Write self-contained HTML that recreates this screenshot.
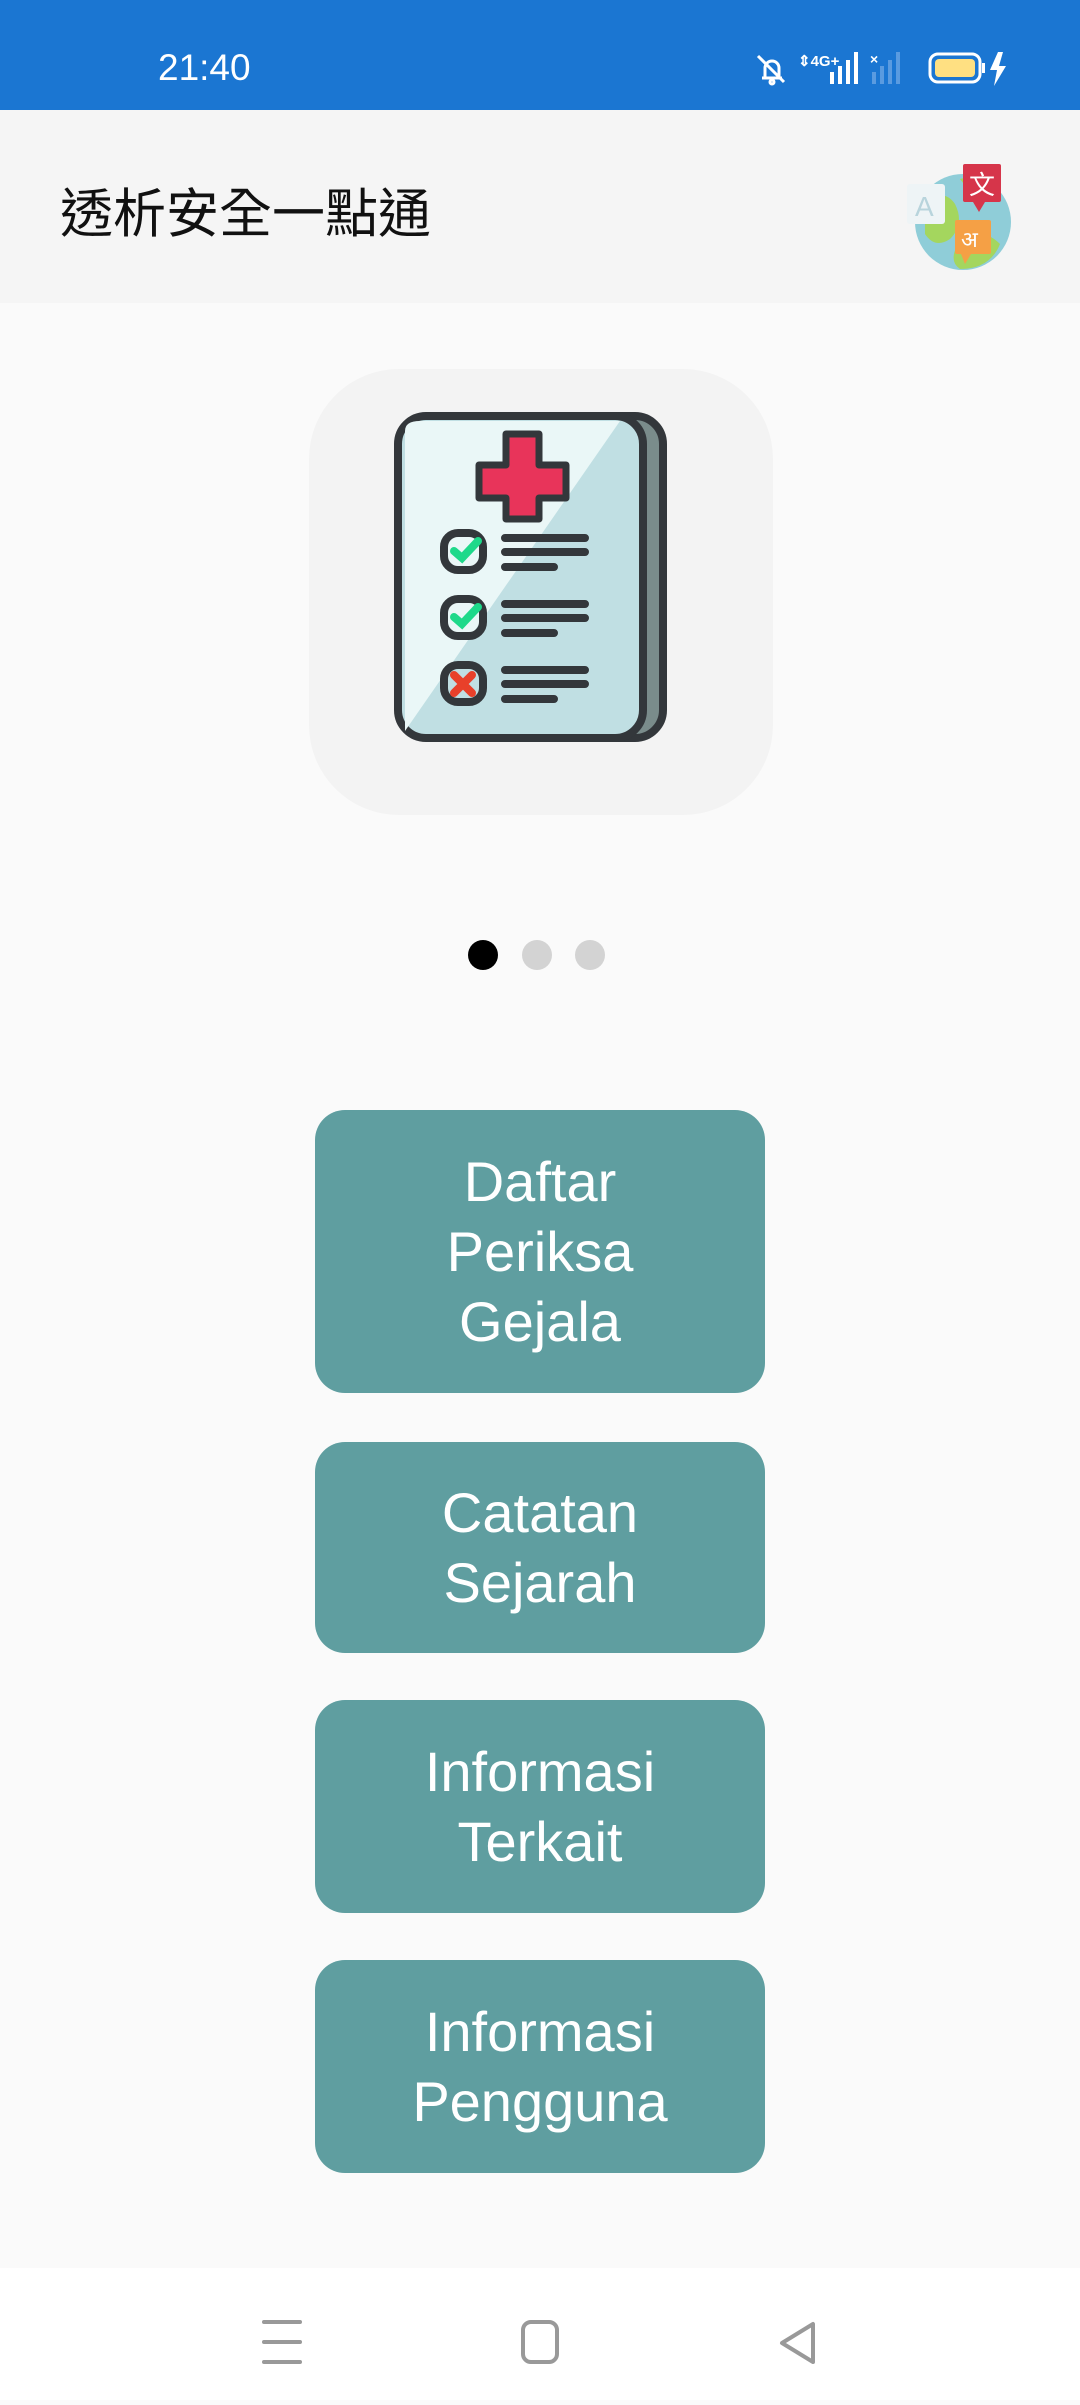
<!DOCTYPE html>
<html><head><meta charset="utf-8">
<style>
*{margin:0;padding:0;box-sizing:border-box}
body{width:1080px;height:2400px;background:#FAFAFA;position:relative;overflow:hidden;font-family:"Liberation Sans","Noto Sans CJK TC",sans-serif}
.status{position:absolute;left:0;top:0;width:1080px;height:110px;background:#1B76D2}
.time{position:absolute;left:158px;top:46px;color:#fff;font-size:37px;line-height:44px}
.appbar{position:absolute;left:0;top:110px;width:1080px;height:193px;background:#F5F5F5}
.title{position:absolute;left:60px;top:68px;font-size:53px;line-height:64px;color:#111;font-family:"Noto Sans CJK TC","WenQuanYi Zen Hei",sans-serif;letter-spacing:0px}
.card{position:absolute;left:309px;top:369px;width:464px;height:446px;background:#F3F3F3;border-radius:90px}
.dot{position:absolute;top:940px;width:30px;height:30px;border-radius:50%;background:#D3D3D3}
.btn{position:absolute;left:315px;width:450px;background:#5F9EA0;border-radius:30px;color:#fff;font-size:56px;line-height:70px;text-align:center;display:flex;align-items:center;justify-content:center}
.nav{position:absolute;left:0;top:2268px;width:1080px;height:132px;background:#fff}
</style></head><body>
<div class="status">
<div class="time">21:40</div>
<svg style="position:absolute;left:750px;top:48px" width="270" height="40" viewBox="0 0 270 40">
 <g fill="none" stroke="#fff" stroke-width="3">
  <path d="M12 30 h20 M15 30 v-10 a7 7 0 0 1 14 0 v10 M8 8 L34 34"/>
  <circle cx="22" cy="34" r="2"/>
 </g>
 <text x="48" y="18" fill="#fff" font-size="15" font-family="Liberation Sans" font-weight="bold">⇕4G+</text>
 <g fill="#fff"><rect x="80" y="24" width="4" height="12"/><rect x="88" y="18" width="4" height="18"/><rect x="96" y="12" width="4" height="24"/><rect x="104" y="4" width="4" height="32"/></g>
 <text x="120" y="16" fill="#fff" font-size="14" font-weight="bold" font-family="Liberation Sans">×</text>
 <g fill="#5A9BE0"><rect x="122" y="24" width="4" height="12"/><rect x="130" y="18" width="4" height="18"/><rect x="138" y="12" width="4" height="24"/><rect x="146" y="4" width="4" height="32"/></g>
 <rect x="180" y="6" width="50" height="28" rx="8" fill="none" stroke="#fff" stroke-width="3"/>
 <rect x="185" y="11" width="40" height="18" rx="4" fill="#FFE082"/>
 <rect x="232" y="15" width="3" height="10" fill="#fff"/>
 <path d="M248 4 L240 22 h7 l-3 16 l12 -20 h-7 l4 -14z" fill="#fff"/>
</svg>
</div>
<div class="appbar">
<div class="title">透析安全一點通</div>
<svg style="position:absolute;left:905px;top:44px" width="110" height="120" viewBox="0 0 110 120">
 <circle cx="58" cy="68" r="48" fill="#8FCDD8"/>
 <path d="M20 45 q20 -10 30 5 q10 20 -5 35 q-15 10 -25 -5z M60 80 q20 -5 35 10 q-10 25 -40 25 q-15 -10 5 -35z M55 25 q15 -5 35 5 q-10 10 -25 8z" fill="#A4D65E"/>
 <rect x="2" y="30" width="38" height="40" rx="3" fill="#EEF4F6"/>
 <text x="10" y="62" fill="#B8D4DC" font-size="28" font-family="Liberation Sans">A</text>
 <rect x="58" y="10" width="38" height="38" rx="2" fill="#D6354A"/>
 <path d="M68 48 l6 10 l6 -10z" fill="#D6354A"/>
 <text x="64" y="40" fill="#fff" font-size="26" font-family="Noto Sans CJK SC">文</text>
 <rect x="50" y="66" width="36" height="34" rx="2" fill="#F5A045"/>
 <path d="M56 100 l4 10 l6 -10z" fill="#F5A045"/>
 <text x="56" y="93" fill="#fff" font-size="22" font-family="DejaVu Sans">अ</text>
</svg>
</div>
<div class="card"></div>
<svg style="position:absolute;left:393px;top:411px" width="276" height="334" viewBox="0 0 276 334">
 <rect x="30" y="5" width="240" height="322" rx="28" fill="#7A8C8B" stroke="#33373B" stroke-width="8"/>
 <rect x="5" y="5" width="245" height="322" rx="28" fill="#C0DFE3" stroke="#33373B" stroke-width="8"/>
 <path d="M12 20 q0 -10 15 -10 h200 L12 320z" fill="#EAF7F7"/>
 <path d="M113 23 h33 v31 h27 v33 h-27 v21 h-33 v-21 h-27 v-33 h27z" fill="#E8345A" stroke="#33373B" stroke-width="7" stroke-linejoin="round"/>
 <g fill="none" stroke="#33373B" stroke-width="8" stroke-linecap="round">
  <rect x="51" y="122" width="39" height="37" rx="14"/>
  <rect x="51" y="188" width="39" height="37" rx="14"/>
  <rect x="51" y="254" width="39" height="37" rx="14"/>
  <path d="M112 127 h80 M112 141 h80 M112 156 h49 M112 193 h80 M112 207 h80 M112 222 h49 M112 259 h80 M112 273 h80 M112 288 h49"/>
 </g>
 <g fill="none" stroke="#1ED98A" stroke-width="8" stroke-linecap="round">
  <path d="M61 140 l8 7 l16 -17 M61 206 l8 7 l16 -17"/>
 </g>
 <path d="M61 264 l18 18 M79 264 l-18 18" stroke="#E8402A" stroke-width="8" stroke-linecap="round"/>
</svg>
<div class="dot" style="left:468px;background:#000"></div>
<div class="dot" style="left:522px"></div>
<div class="dot" style="left:575px"></div>
<div class="btn" style="top:1110px;height:283px">Daftar<br>Periksa<br>Gejala</div>
<div class="btn" style="top:1442px;height:211px">Catatan<br>Sejarah</div>
<div class="btn" style="top:1700px;height:213px">Informasi<br>Terkait</div>
<div class="btn" style="top:1960px;height:213px">Informasi<br>Pengguna</div>
<div class="nav">
<svg width="1080" height="132" viewBox="0 0 1080 132">
 <g fill="none" stroke="#999" stroke-width="4" stroke-linecap="round" stroke-linejoin="round">
  <path d="M264 54 h36 M264 74 h36 M264 94 h36"/>
  <rect x="523" y="54" width="34" height="40" rx="8"/>
  <path d="M813 56 v38 l-31 -19 z"/>
 </g>
</svg>
</div>
</body></html>
